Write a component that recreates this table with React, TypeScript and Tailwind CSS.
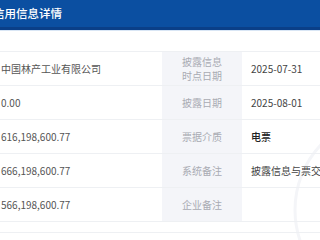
const rows = [
    {
        left: '中国林产工业有限公司',
        label: ['披露信息', '时点日期'],
        value: '2025-07-31',
    },
    { left: '0.00', label: ['披露日期'], value: '2025-08-01' },
    { left: '616,198,600.77', label: ['票据介质'], value: '电票', strong: true },
    { left: '666,198,600.77', label: ['系统备注'], value: '披露信息与票交所系统数据一致' },
    { left: '566,198,600.77', label: ['企业备注'], value: '' },
];

export default function App() {
    return (
        <div
            className="relative w-[320px] h-[240px] overflow-hidden bg-white"
            style={{ fontFamily: '"Noto Sans CJK SC", "Liberation Sans", sans-serif' }}
        >
            {/* faint watermark ring behind the table */}
            <svg
                className="absolute left-[200px] top-[100px] pointer-events-none"
                width="200"
                height="160"
                viewBox="0 0 200 160"
            >
                <circle cx="190" cy="110" r="95" fill="none" stroke="#f4f5f8" strokeWidth="3" />
            </svg>

            <div className="relative">
                <div className="h-[30px] bg-[#0b4fa1] flex items-center border-b-[3px] border-[#0a3f88]">
                    <span className="ml-[-7px] text-[11.5px] font-medium text-white whitespace-nowrap">
                        信用信息详情
                    </span>
                </div>
                <div className="h-px bg-[#d9e6f5]" />

                <div className="mt-[20px] border-t border-[#eef0f3]">
                    {rows.map((row) => (
                        <div key={row.left} className="flex h-[34px] border-b border-[#eef0f3]">
                            <div className="w-[162px] shrink-0 flex items-center pl-[1px] text-[10px] text-[#555] whitespace-nowrap overflow-hidden">
                                {row.left}
                            </div>
                            <div className="w-[80px] shrink-0 bg-[#f4f5f9] flex flex-col items-center justify-center text-[10px] leading-[14px] text-[#a9abb3]">
                                {row.label.map((l) => (
                                    <span key={l}>{l}</span>
                                ))}
                            </div>
                            <div
                                className={`flex-1 flex items-center pl-[9px] text-[10px] whitespace-nowrap overflow-hidden ${
                                    row.strong ? 'text-[#222] font-medium' : 'text-[#444]'
                                }`}
                            >
                                {row.value}
                            </div>
                        </div>
                    ))}
                </div>
                <div className="mt-[10px] border-t border-[#eef0f3]" />
            </div>
        </div>
    );
}
